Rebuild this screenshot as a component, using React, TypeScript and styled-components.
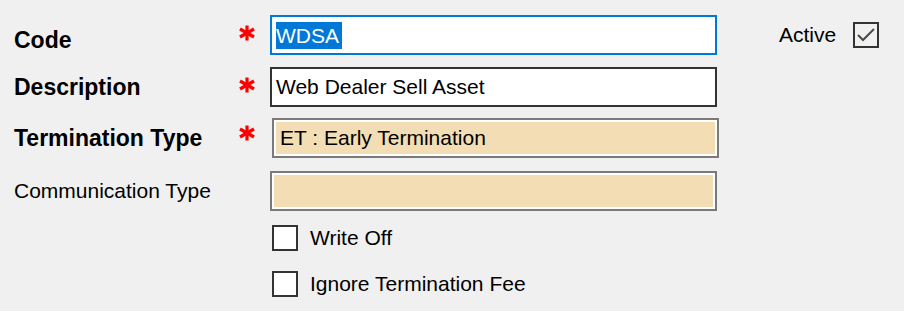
import React from 'react'
import styled, { createGlobalStyle, css } from 'styled-components'

const GlobalStyle = createGlobalStyle`
  * {
    box-sizing: border-box;
    margin: 0;
    padding: 0;
  }
  body {
    background: #f0f0f0;
    font-family: "Liberation Sans", Arial, sans-serif;
    color: #000;
  }
`

const Page = styled.div`
  width: 904px;
  height: 311px;
  padding: 15px 0 0 14px;
  background: #f0f0f0;
  overflow: hidden;
`

const Row = styled.div<{ $h: number }>`
  display: flex;
  align-items: flex-start;
  height: ${p => p.$h}px;
`

const Label = styled.div<{ $bold?: boolean; $drop?: number }>`
  width: 224px;
  height: 40px;
  display: flex;
  align-items: center;
  padding-top: ${p => (p.$drop || 0) * 2}px;
  font-size: ${p => (p.$bold ? '23px' : '21px')};
  font-weight: ${p => (p.$bold ? 700 : 400)};
  white-space: nowrap;
`

const Required = styled.div<{ $top?: number }>`
  width: 32px;
  padding-top: ${p => (p.$top ?? 10)}px;
  display: flex;
`

const Spacer = styled.div`
  width: 256px;
`

type Tone = 'focus' | 'normal' | 'readonly'

const toneStyles = {
  focus: css`
    border: 2px solid #0078d7;
    background: #fff;
  `,
  normal: css`
    border: 2px solid #333;
    background: #fff;
  `,
  readonly: css`
    border: 2px solid #7a7a7a;
    box-shadow: inset 0 0 0 2px #fff;
    background: #f3ddb4;
  `,
}

const Field = styled.div<{ $tone: Tone; $shift?: number }>`
  width: 447px;
  height: 40px;
  margin-left: ${p => p.$shift || 0}px;
  display: flex;
  align-items: center;
  padding-left: ${p => (p.$tone === 'readonly' ? 6 : 4)}px;
  font-size: 21px;
  white-space: nowrap;
  ${p => toneStyles[p.$tone]}
`

const Selected = styled.span`
  background: #0078d7;
  color: #fff;
  padding: 2px 3px 2px 0;
  line-height: 23px;
`

const Side = styled.div`
  display: flex;
  align-items: center;
  gap: 17px;
  height: 40px;
  margin-left: 62px;
  font-size: 21px;
`

const Box = styled.div<{ $fill?: string }>`
  width: 26px;
  height: 26px;
  border: 2px solid #333;
  background: ${p => p.$fill || '#fff'};
  display: flex;
  align-items: center;
  justify-content: center;
`

const Check = styled.label`
  display: flex;
  align-items: center;
  gap: 12px;
  margin-left: 2px;
  font-size: 21px;
`

const Star = () => (
  <svg width="18" height="16" viewBox="0 0 18 16">
    <g stroke="#ff0000" strokeWidth="3.2" strokeLinecap="butt">
      <line x1="9" y1="0.5" x2="9" y2="15.5" />
      <line x1="2" y1="4" x2="16" y2="12" />
      <line x1="2" y1="12" x2="16" y2="4" />
    </g>
  </svg>
)

const Tick = () => (
  <svg width="20" height="18" viewBox="0 0 20 18">
    <path d="M2 9 L7 14 L18 3" fill="none" stroke="#4a4a4a" strokeWidth="2" />
  </svg>
)

export default function App() {
  return (
    <>
      <GlobalStyle />
      <Page>
        <Row $h={52}>
          <Label $bold $drop={5}>Code</Label>
          <Required><Star /></Required>
          <Field $tone="focus"><Selected>WDSA</Selected></Field>
          <Side>
            Active
            <Box $fill="#f0f0f0"><Tick /></Box>
          </Side>
        </Row>
        <Row $h={51}>
          <Label $bold>Description</Label>
          <Required><Star /></Required>
          <Field $tone="normal">Web Dealer Sell Asset</Field>
        </Row>
        <Row $h={53}>
          <Label $bold>Termination Type</Label>
          <Required $top={7}><Star /></Required>
          <Field $tone="readonly" $shift={2}>ET : Early Termination</Field>
        </Row>
        <Row $h={54}>
          <Label>Communication Type</Label>
          <Required />
          <Field $tone="readonly" />
        </Row>
        <Row $h={46}>
          <Spacer />
          <Check><Box />Write Off</Check>
        </Row>
        <Row $h={26}>
          <Spacer />
          <Check><Box />Ignore Termination Fee</Check>
        </Row>
      </Page>
    </>
  )
}
